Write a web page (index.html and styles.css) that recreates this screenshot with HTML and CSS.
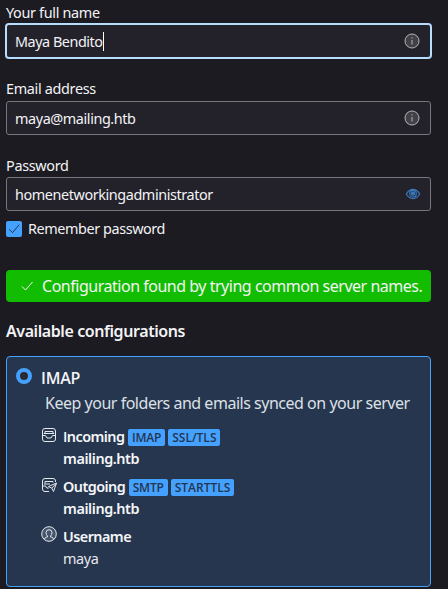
FILE: index.html
```html
<!DOCTYPE html>
<html lang="en">
<head>
<meta charset="utf-8">
<title>Account setup</title>
<link rel="stylesheet" href="styles.css">
</head>
<body>
<form class="setup">
  <div class="field">
    <div class="label">Your full name</div>
    <div class="input focused"><span class="value">Maya Bendito</span><span class="caret"></span>
      <svg class="info" viewBox="0 0 16 16"><circle cx="8" cy="8" r="7"/><path d="M8 7v4.5M8 4.3v1.2"/></svg>
    </div>
  </div>
  <div class="field email">
    <div class="label">Email address</div>
    <div class="input"><span class="value">maya@mailing.htb</span>
      <svg class="info" viewBox="0 0 16 16"><circle cx="8" cy="8" r="7"/><path d="M8 7v4.5M8 4.3v1.2"/></svg>
    </div>
  </div>
  <div class="field password">
    <div class="label">Password</div>
    <div class="input"><span class="value">homenetworkingadministrator</span>
      <svg class="eye" viewBox="0 0 16 16"><path d="M1.3 8Q4 3.400 8 3.400T14.700 8Q12 12.600 8 12.600T1.300 8Z"/><circle cx="8" cy="7.700" r="3.300"/><circle class="pupil" cx="8" cy="7.500" r="1.600"/></svg>
    </div>
  </div>
  <div class="remember">
    <span class="checkbox"><svg viewBox="0 0 16 16"><path d="M3.300 8.300l3.200 3.400 6.700-8"/></svg></span>
    <span>Remember password</span>
  </div>
  <div class="notice">
    <svg viewBox="0 0 16 16"><path d="M3 8.500l3.500 3.500 7-8"/></svg>
    <span class="notice-text">Configuration found by trying common server names.</span>
  </div>
  <div class="heading">Available configurations</div>
  <div class="card">
    <div class="protocol"><span class="radio"></span><span class="protocol-name">IMAP</span></div>
    <div class="description">Keep your folders and emails synced on your server</div>
    <div class="server incoming">
      <svg viewBox="0 0 16 16"><rect x="1.500" y="1.500" width="13" height="13" rx="2.500"/><path d="M4 6.500V4.500h8v2M3 7V6.500h10V7M1.500 8.500h3l1.500 2.500h4l1.500-2.500h3"/></svg>
      <div class="details"><div class="row"><b>Incoming</b><span class="tag">IMAP</span><span class="tag wide">SSL/TLS</span></div><div class="row host">mailing.htb</div></div>
    </div>
    <div class="server outgoing">
      <svg viewBox="0 0 16 16"><path d="M14.500 5V4Q14.500 1.500 12 1.500H4Q1.500 1.500 1.500 4v8q0 2.500 2.500 2.500h4M4 6.500v-2h8v1M1.500 9h3l1.200 2h2M3 7h6"/><path d="M7.500 9.500l8-3.500-3 8.500-1.700-3.300zM10.800 11.200L15.500 6"/></svg>
      <div class="details"><div class="row"><b>Outgoing</b><span class="tag">SMTP</span><span class="tag wide">STARTTLS</span></div><div class="row host">mailing.htb</div></div>
    </div>
    <div class="server username">
      <svg viewBox="0 0 16 16"><circle class="disc" cx="8" cy="8" r="7.300"/><path d="M3.500 13.200Q4 11 6.500 10.900V10Q5 8.700 5 6.700 5 3.700 8 3.700t3 3q0 2-1.500 3.300v.9Q12 11 12.500 13.200"/></svg>
      <div class="details"><div class="row"><b>Username</b></div><div class="row">maya</div></div>
    </div>
  </div>
</form>
</body>
</html>
```
FILE: styles.css
```css
* { box-sizing: border-box; }
body {
  margin: 0;
  height: 589px;
  overflow: hidden;
  background: #1c1b21;
  color: #f3f3f6;
  font: 14.4px/22px "Noto Sans", sans-serif;
  letter-spacing: -0.41px;
  white-space: nowrap;
}
svg { fill: none; stroke: currentColor; flex: none; }
.setup { width: 431px; padding: 1px 0 0 6px; }
.field { height: 77px; }
.label { height: 23px; padding-top: 1px; letter-spacing: -0.32px; }
.email { height: 76px; }
.email .label { padding-top: 0; }
.password { height: 57px; }
.input {
  display: flex;
  align-items: center;
  height: 34px;
  padding: 0 10px 0 8px;
  border: 1px solid #76757b;
  border-radius: 3px;
  background: #23222b;
}
.input.focused { border-color: #b8deff; box-shadow: 0 0 0 1px #b8deff; }
.value { padding-top: 1px; }
.focused .value { padding-top: 2px; letter-spacing: -0.46px; }
.password .value { padding-top: 2px; }
.caret { width: 1px; height: 19px; background: #fff; }
.input svg { width: 16px; height: 16px; margin: -1px 0 0 auto; }
.info { color: #b4b4b8; }
.info circle { fill: #414147; }
.input .eye { margin-right: -1px; color: #3979bc; stroke-width: 1.2; }
.pupil { fill: currentColor; }
.remember { display: flex; align-items: center; gap: 6px; height: 22px; margin-top: 7px; }
.checkbox { width: 16px; height: 16px; border-radius: 2px; background: #45a1ff; color: #23364f; }
.checkbox svg { display: block; width: 16px; }
.notice {
  display: flex;
  align-items: center;
  height: 32px;
  margin-top: 30px;
  padding-left: 13px;
  border-radius: 4px;
  background: #12bc00;
  font-size: 16px;
  letter-spacing: -0.48px;
}
.notice svg { width: 16px; margin-right: 7px; }
.heading { margin: 18px 0 14px; font-size: 16px; font-weight: 600; letter-spacing: -0.42px; }
.card {
  height: 231px;
  padding: 9px 0 0 9px;
  border: 1px solid #45a1ff;
  border-radius: 4px;
  background: #26364e;
}
.protocol { display: flex; gap: 9px; height: 25px; font: 600 16px/24px "Open Sans", sans-serif; letter-spacing: -0.2px; }
.radio { width: 16px; height: 16px; margin-top: 2px; border: 5px solid #45a1ff; border-width: 4.500px; border-radius: 50%; background: #2b2a33; }
.description { height: 24px; margin-left: 29px; font-size: 16px; line-height: 24px; color: #dce0e7; letter-spacing: -0.48px; }
.server { display: flex; height: 50px; padding-left: 25px; color: #e6e9ef; }
.incoming { margin-top: 10px; }
.server svg { width: 16px; height: 16px; margin: 2px 6px 0 0; }
.username svg { margin-top: 1px; }
.details { padding-top: 1px; }
.disc { fill: #46546b; }
.row { display: flex; align-items: center; height: 22px; }
b, .host { font-weight: 600; color: #f5f6f9; }
b { letter-spacing: -0.54px; }
.incoming b::first-letter { font-family: "Open Sans", sans-serif; }
.tag {
  height: 17px;
  margin: 1px 0 0 3.5px;
  padding: 0 4px;
  border-radius: 2px;
  background: #45a1ff;
  color: #23364f;
  font: 600 12px/17px "Open Sans", sans-serif;
  letter-spacing: -0.2px;
}
.tag.wide { margin-left: 3px; letter-spacing: 0; }
```
